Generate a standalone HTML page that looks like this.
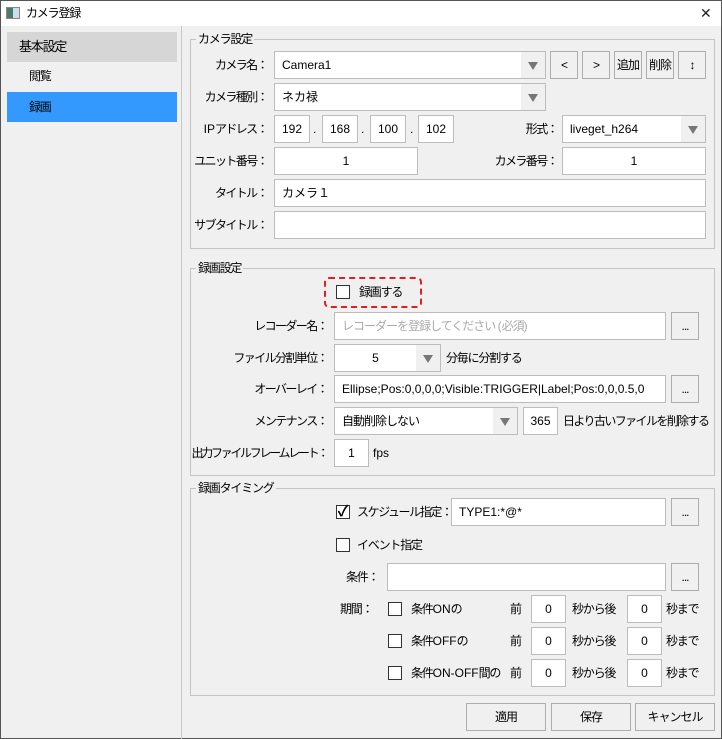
<!DOCTYPE html><html><head><meta charset="utf-8"><style>
*{box-sizing:border-box}body{margin:0;width:722px;height:739px;overflow:hidden;font-family:"Liberation Sans","Noto Sans CJK JP",sans-serif;font-size:12px;color:#000;background:#f0f0f0}
.win{position:absolute;left:0;top:0;width:722px;height:739px;border:1px solid #555;background:#f0f0f0}
.a{position:absolute}
.f{position:absolute;background:#fff;border:1px solid #bcbcbc;height:28px;line-height:26px;padding-left:7px;white-space:nowrap;overflow:hidden}
.c{text-align:center;padding-left:0}
.ar{position:absolute;right:0;top:0;width:24px;height:26px;background:#f0f0f0}
.ar:after{content:"";position:absolute;left:7px;top:10px;border-left:5px solid transparent;border-right:5px solid transparent;border-top:8px solid #777}
.b{position:absolute;background:#f0f0f0;border:1px solid #adadad;height:28px;line-height:26px;text-align:center;letter-spacing:-1px}
.l{position:absolute;text-align:right;line-height:28px;white-space:nowrap;letter-spacing:-1.6px}
.t{position:absolute;line-height:28px;white-space:nowrap;letter-spacing:-1.2px}
.g{position:absolute;border:1px solid #c4c4c4}
.gl{position:absolute;background:#f0f0f0;padding:0 2px;line-height:14px;letter-spacing:-1.2px}
.cb{position:absolute;width:14px;height:14px;border:1px solid #333;background:#fff}
i{font-style:normal;letter-spacing:0}
</style></head><body><div class="win">
<div class="a" style="left:0;top:0;width:720px;height:25px;background:#fff"></div>
<div class="a" style="left:5px;top:6px;width:14px;height:12px;border:1px solid #888;background:linear-gradient(90deg,#4a7a6a 0 50%,#cde 50%)"></div>
<div class="t" style="left:25px;top:-2px">カメラ登録</div>
<div class="t" style="left:699px;top:-2px;font-size:14px;color:#222">✕</div>
<div class="a" style="left:180px;top:25px;width:1px;height:713px;background:#c8c8c8"></div>
<div class="a" style="left:6px;top:31px;width:170px;height:30px;background:#d6d6d6"></div>
<div class="t" style="left:18px;top:32px;font-size:13px">基本設定</div>
<div class="t" style="left:28px;top:61px">閲覧</div>
<div class="a" style="left:6px;top:91px;width:170px;height:30px;background:#3399ff"></div>
<div class="t" style="left:28px;top:92px">録画</div>

<div class="g" style="left:189px;top:38px;width:525px;height:210px"></div><div class="gl" style="left:195px;top:31px">カメラ設定</div>
<div class="l" style="left:150px;width:116px;top:50px">カメラ名：</div><div class="f" style="left:273px;top:50px;width:272px">Camera1<div class="ar"></div></div>
<div class="b" style="left:549px;top:50px;width:28px">&lt;</div><div class="b" style="left:581px;top:50px;width:28px">&gt;</div><div class="b" style="left:613px;top:50px;width:28px">追加</div><div class="b" style="left:645px;top:50px;width:28px">削除</div><div class="b" style="left:677px;top:50px;width:28px">↕</div>
<div class="l" style="left:150px;width:116px;top:82px">カメラ種別：</div><div class="f" style="left:273px;top:82px;width:272px">ネカ禄<div class="ar"></div></div>
<div class="l" style="left:150px;width:116px;top:114px"><i>IP</i>アドレス：</div>
<div class="f c" style="left:273px;top:114px;width:36px">192</div><div class="t" style="left:312px;top:114px">.</div>
<div class="f c" style="left:321px;top:114px;width:36px">168</div><div class="t" style="left:360px;top:114px">.</div>
<div class="f c" style="left:369px;top:114px;width:36px">100</div><div class="t" style="left:409px;top:114px">.</div>
<div class="f c" style="left:417px;top:114px;width:36px">102</div>
<div class="l" style="left:450px;width:106px;top:114px">形式：</div><div class="f" style="left:561px;top:114px;width:144px">liveget_h264<div class="ar"></div></div>
<div class="l" style="left:150px;width:116px;top:146px">ユニット番号：</div><div class="f c" style="left:273px;top:146px;width:144px">1</div>
<div class="l" style="left:450px;width:106px;top:146px">カメラ番号：</div><div class="f c" style="left:561px;top:146px;width:144px">1</div>
<div class="l" style="left:150px;width:116px;top:178px">タイトル：</div><div class="f" style="left:273px;top:178px;width:432px">カメラ１</div>
<div class="l" style="left:150px;width:116px;top:210px">サブタイトル：</div><div class="f" style="left:273px;top:210px;width:432px"></div>

<div class="g" style="left:189px;top:267px;width:525px;height:208px"></div><div class="gl" style="left:195px;top:260px">録画設定</div>
<div class="a" style="left:323px;top:276px;width:98px;height:31px;border:2px dashed #e02020;border-radius:5px"></div>
<div class="cb" style="left:335px;top:284px"></div><div class="t" style="left:358px;top:277px">録画する</div>
<div class="l" style="left:150px;width:176px;top:311px">レコーダー名：</div><div class="f" style="left:333px;top:311px;width:332px;color:#aaa;letter-spacing:-1px">レコーダーを登録してください <i>(</i>必須<i>)</i></div><div class="b" style="left:670px;top:311px;width:28px">...</div>
<div class="l" style="left:150px;width:176px;top:343px">ファイル分割単位：</div><div class="f c" style="left:333px;top:343px;width:107px;padding-right:24px">5<div class="ar"></div></div><div class="t" style="left:445px;top:343px">分毎に分割する</div>
<div class="l" style="left:150px;width:176px;top:374px">オーバーレイ：</div><div class="f" style="left:333px;top:374px;width:332px">Ellipse;Pos:0,0,0,0;Visible:TRIGGER|Label;Pos:0,0,0.5,0</div><div class="b" style="left:670px;top:374px;width:28px">...</div>
<div class="l" style="left:150px;width:176px;top:406px">メンテナンス：</div><div class="f" style="left:333px;top:406px;width:184px;letter-spacing:-1px">自動削除しない<div class="ar"></div></div><div class="f c" style="left:522px;top:406px;width:35px">365</div><div class="t" style="left:562px;top:406px;letter-spacing:-1.6px">日より古いファイルを削除する</div>
<div class="l" style="left:150px;width:176px;top:438px;letter-spacing:-2.3px">出力ファイルフレームレート：</div><div class="f c" style="left:333px;top:438px;width:35px">1</div><div class="t" style="left:372px;top:438px;letter-spacing:0">fps</div>

<div class="g" style="left:189px;top:487px;width:525px;height:208px"></div><div class="gl" style="left:195px;top:480px">録画タイミング</div>
<div class="cb" style="left:335px;top:504px;font-size:15px;line-height:12px;text-align:center;font-weight:bold">✓</div><div class="t" style="left:356px;top:497px;letter-spacing:-1.4px">スケジュール指定：</div><div class="f" style="left:450px;top:497px;width:215px">TYPE1:*@*</div><div class="b" style="left:670px;top:497px;width:28px">...</div>
<div class="cb" style="left:335px;top:537px"></div><div class="t" style="left:356px;top:530px">イベント指定</div>
<div class="t" style="left:345px;top:562px">条件：</div><div class="f" style="left:386px;top:562px;width:279px"></div><div class="b" style="left:670px;top:562px;width:28px">...</div>
<div class="t" style="left:339px;top:594px">期間：</div>
<div class="cb" style="left:387px;top:601px"></div><div class="t" style="left:410px;top:594px">条件<i>ON</i>の</div><div class="t" style="left:509px;top:594px">前</div><div class="f c" style="left:530px;top:594px;width:35px">0</div><div class="t" style="left:571px;top:594px">秒から後</div><div class="f c" style="left:626px;top:594px;width:35px">0</div><div class="t" style="left:665px;top:594px">秒まで</div>
<div class="cb" style="left:387px;top:633px"></div><div class="t" style="left:410px;top:626px">条件<i>OFF</i>の</div><div class="t" style="left:509px;top:626px">前</div><div class="f c" style="left:530px;top:626px;width:35px">0</div><div class="t" style="left:571px;top:626px">秒から後</div><div class="f c" style="left:626px;top:626px;width:35px">0</div><div class="t" style="left:665px;top:626px">秒まで</div>
<div class="cb" style="left:387px;top:665px"></div><div class="t" style="left:410px;top:658px">条件<i>ON-OFF</i>間の</div><div class="t" style="left:509px;top:658px">前</div><div class="f c" style="left:530px;top:658px;width:35px">0</div><div class="t" style="left:571px;top:658px">秒から後</div><div class="f c" style="left:626px;top:658px;width:35px">0</div><div class="t" style="left:665px;top:658px">秒まで</div>

<div class="b" style="left:465px;top:702px;width:80px;height:28px">適用</div>
<div class="b" style="left:550px;top:702px;width:80px;height:28px">保存</div>
<div class="b" style="left:634px;top:702px;width:80px;height:28px">キャンセル</div>
</div></body></html>
